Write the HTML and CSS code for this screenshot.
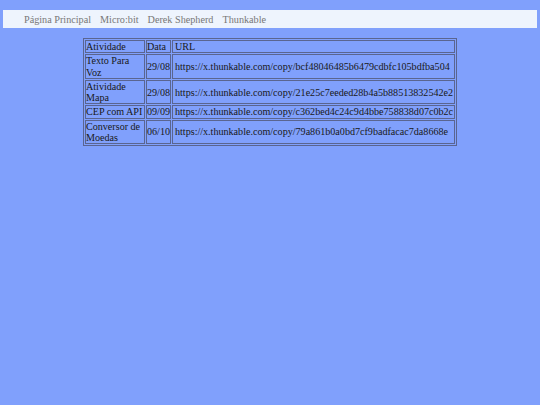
FILE: index.html
```html
<!DOCTYPE html>
<html>
<head>
<meta charset="utf-8">
<link rel="stylesheet" href="styles.css">
</head>
<body>
<nav class="topnav">
  <a class="navlink" href="#">Página Principal</a>
  <a class="navlink" href="#">Micro:bit</a>
  <a class="navlink" href="#">Derek Shepherd</a>
  <a class="navlink" href="#">Thunkable</a>
</nav>
<div class="content">
<table class="grid">
  <tr><td class="c1">Atividade</td><td>Data</td><td class="c3">URL</td></tr>
  <tr><td class="c1">Texto Para Voz</td><td>29/08</td><td class="c3">https://x.thunkable.com/copy/bcf48046485b6479cdbfc105bdfba504</td></tr>
  <tr><td class="c1">Atividade Mapa</td><td>29/08</td><td class="c3">https://x.thunkable.com/copy/21e25c7eeded28b4a5b88513832542e2</td></tr>
  <tr><td class="c1">CEP com API</td><td>09/09</td><td class="c3">https://x.thunkable.com/copy/c362bed4c24c9d4bbe758838d07c0b2c</td></tr>
  <tr><td class="c1">Conversor de Moedas</td><td>06/10</td><td class="c3">https://x.thunkable.com/copy/79a861b0a0bd7cf9badfacac7da8668e</td></tr>
</table>
</div>
</body>
</html>
```
FILE: styles.css
```css
html, body {
  margin: 0;
  padding: 0;
}
body {
  background: #80a0fc;
  font-family: "Liberation Serif", "Times New Roman", serif;
  padding: 10px 3px;
}
.topnav {
  background: #eef4fd;
  display: flex;
  gap: 9px;
  padding: 0 21px;
  height: 18px;
  align-items: center;
  font-size: 10.2px;
}
.navlink {
  color: #777;
  text-decoration: none;
}
.content {
  display: flex;
  padding-top: 10px;
  padding-left: 80px;
}
.grid {
  border: 1px solid #5a6590;
  border-spacing: 1px;
  font-size: 10.1px;
  color: #181818;
}
.grid td {
  border: 1px solid #5a6590;
  padding: 0;
  line-height: 11.3px;
}
.c1 {
  width: 58px;
}
.grid .c3 {
  padding: 0 1px 0 2px;
}
```
